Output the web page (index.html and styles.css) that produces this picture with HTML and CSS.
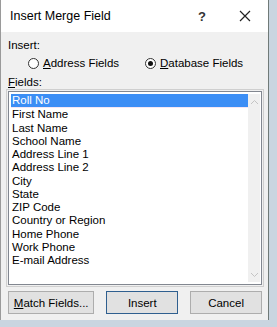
FILE: index.html
```html
<!DOCTYPE html>
<html>
<head>
  <title>Insert Merge Field</title>
  <meta charset="UTF-8">
  <link rel="stylesheet" href="styles.css">
</head>
<body>
  <div class="dialog">
    <div class="titlebar">
      <span class="title">Insert Merge Field</span>
      <span class="help">?</span>
      <span class="close">
        <svg width="12" height="12" viewBox="0 0 12 12"><path d="M1 1L11 11M11 1L1 11" stroke="#222" stroke-width="1.2"/></svg>
      </span>
    </div>
    <div class="content">
      <div class="label">Insert:</div>
      <div class="radios">
        <label class="radio"><span class="circle"></span><span><u>A</u>ddress Fields</span></label>
        <label class="radio"><span class="circle checked"></span><span><u>D</u>atabase Fields</span></label>
      </div>
      <div class="label fields-label"><u>F</u>ields:</div>
      <div class="listbox">
        <ul class="items">
          <li class="selected">Roll No</li>
          <li>First Name</li>
          <li>Last Name</li>
          <li>School Name</li>
          <li>Address Line 1</li>
          <li>Address Line 2</li>
          <li>City</li>
          <li>State</li>
          <li>ZIP Code</li>
          <li>Country or Region</li>
          <li>Home Phone</li>
          <li>Work Phone</li>
          <li>E-mail Address</li>
        </ul>
        <div class="scrollbar">
          <svg width="9" height="6" viewBox="0 0 9 6"><path d="M1 5L4.5 1.5L8 5" fill="none" stroke="#c4c4c4" stroke-width="1"/></svg>
          <svg width="9" height="6" viewBox="0 0 9 6"><path d="M1 1L4.5 4.5L8 1" fill="none" stroke="#c4c4c4" stroke-width="1"/></svg>
        </div>
      </div>
      <div class="buttons">
        <button class="btn match"><u>M</u>atch Fields...</button>
        <button class="btn insert">Insert</button>
        <button class="btn cancel">Cancel</button>
      </div>
    </div>
  </div>
</body>
</html>
```

FILE: styles.css
```css
body {
  margin: 0;
  width: 277px;
  height: 327px;
  background-color: #c9d5e0;
  font-family: "Liberation Sans", Arial, sans-serif;
  font-size: 11.5px;
  color: #000;
  overflow: hidden;
}

.dialog {
  width: 269px;
  height: 320px;
  background-color: #f0f0f0;
  border-left: 1px solid #9a9a9a;
  border-right: 1px solid #707a78;
  box-sizing: border-box;
  display: flex;
  flex-direction: column;
}

.titlebar {
  height: 32px;
  background-color: #fff;
  display: flex;
  align-items: center;
  padding-left: 9px;
}

.title {
  font-size: 12.5px;
  flex: 1;
}

.help {
  font-size: 13px;
  width: 40px;
  text-align: center;
  font-weight: bold;
  color: #333;
}

.close {
  width: 46px;
  display: flex;
  justify-content: center;
  align-items: center;
}

.content {
  padding: 6px 6px 0 7px;
  display: flex;
  flex-direction: column;
}

.label {
  line-height: 15px;
}

.radios {
  display: flex;
  padding-left: 20px;
  margin-top: 1px;
  height: 18px;
  align-items: center;
}

.radio {
  display: flex;
  align-items: center;
  gap: 4px;
  width: 124px;
}

.circle {
  width: 11px;
  height: 11px;
  border: 1px solid #333;
  border-radius: 50%;
  background: #fff;
  box-sizing: border-box;
  position: relative;
}

.circle.checked::after {
  content: "";
  position: absolute;
  left: 2px;
  top: 2px;
  width: 5px;
  height: 5px;
  border-radius: 50%;
  background: #111;
}

.fields-label {
  margin-top: 3px;
}

.listbox {
  margin-top: 1px;
  height: 194px;
  border: 1px solid #828790;
  outline: 1px solid #cfcfcf;
  outline-offset: 1px;
  background: #fff;
  display: flex;
  padding: 2px 1px 2px 2px;
  box-sizing: border-box;
}

.items {
  list-style: none;
  margin: 0;
  padding: 0;
  flex: 1;
}

.items li {
  height: 13.25px;
  line-height: 13px;
  padding-left: 1px;
  white-space: nowrap;
}

.items li.selected {
  background-color: #3b8ef5;
  color: #fff;
  border-bottom: 1px solid #f3e6f4;
}

.scrollbar {
  width: 12px;
  background: #f0f0f0;
  display: flex;
  flex-direction: column;
  justify-content: space-between;
  align-items: center;
  padding: 5px 0 4px;
}

.buttons {
  display: flex;
  margin-top: 6px;
  gap: 12px;
}

.btn {
  font-family: inherit;
  font-size: 11.5px;
  height: 23px;
  background: #e1e1e1;
  border: 1px solid #adadad;
  padding: 0;
  color: #000;
}

.match {
  width: 89px;
}

.insert {
  width: 74px;
  border: 1px solid #2f5f8f;
  box-shadow: inset 0 0 0 1px #e1e1e1;
}

.cancel {
  width: 74px;
}
```
